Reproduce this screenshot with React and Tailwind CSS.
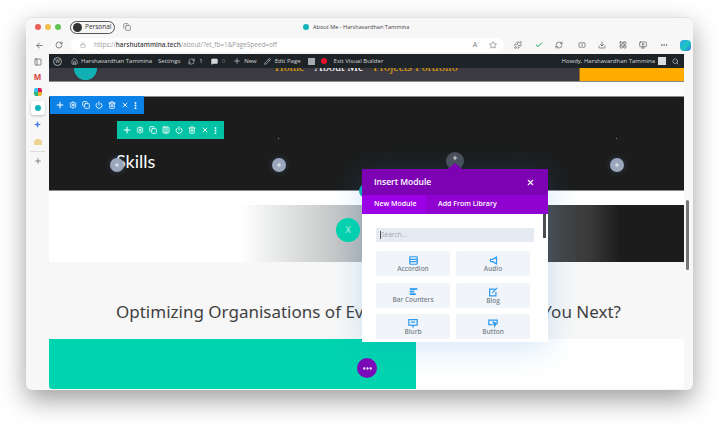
import React from "react";
import {
  ArrowLeft,
  RotateCw,
  Lock,
  Plus,
  Settings,
  Copy,
  Power,
  Trash2,
  X,
  EllipsisVertical,
  Columns3,
  Search,
  Star,
  Pencil,
  MessageSquare,
  RefreshCw,
  House,
  SquareSplitHorizontal,
  LayoutGrid,
  MonitorPlay,
  Ellipsis,
  PanelLeft,
  Puzzle,
  Check,
  Download,
} from "lucide-react";

const blueTools = [Plus, Settings, Copy, Power, Trash2, X];
const greenTools = [Plus, Settings, Copy, Columns3, Power, Trash2, X];

function Toolbar({ tools, className }) {
  return (
    <div className={`absolute flex items-center h-[18px] pl-[5px] gap-[3px] text-white ${className}`}>
      {tools.map((Icon, i) => (
        <span key={i} className="w-[10px] flex justify-center">
          <Icon size={i === 0 ? 10 : 8} strokeWidth={2.5} />
        </span>
      ))}
      <EllipsisVertical size={9} strokeWidth={3} className="-ml-[2px]" />
    </div>
  );
}

function AddDot({ className }) {
  return (
    <div className={`absolute w-[14px] h-[14px] rounded-full bg-[#9aa6bc] flex items-center justify-center text-white shadow-[0_0_6px_rgba(90,120,170,0.35)] ${className}`}>
      <Plus size={6} strokeWidth={3} />
    </div>
  );
}

function AccordionIcon() {
  return (
    <svg width="9" height="9" viewBox="0 0 12 12" fill="none" stroke="#2f9bf0" strokeWidth="1.6">
      <rect x="1" y="1" width="10" height="10" rx="1" />
      <path d="M1 4.5h10M1 7.5h10" />
    </svg>
  );
}
function AudioIcon() {
  return (
    <svg width="9" height="9" viewBox="0 0 12 12" fill="none" stroke="#2f9bf0" strokeWidth="1.6">
      <path d="M2 4.5h3L10 1.5v9L5 7.5H2z" />
    </svg>
  );
}
function BarsIcon() {
  return (
    <svg width="9" height="9" viewBox="0 0 12 12" fill="#2f9bf0">
      <rect x="1" y="1.5" width="10" height="2.4" />
      <rect x="1" y="4.9" width="6" height="2.4" />
      <rect x="1" y="8.3" width="8" height="2.4" />
    </svg>
  );
}
function BlogIcon() {
  return (
    <svg width="10" height="10" viewBox="0 0 12 12" fill="none" stroke="#2f9bf0" strokeWidth="1.5">
      <path d="M8.5 2.5H2v8h7.5V6" />
      <path d="M5 7l6-6" />
    </svg>
  );
}
function BlurbIcon() {
  return (
    <svg width="10" height="10" viewBox="0 0 12 12" fill="none" stroke="#2f9bf0" strokeWidth="1.5">
      <path d="M1 2h10v6.5H7L6 10.5 5 8.5H1z" />
      <path d="M3.5 5h5" />
    </svg>
  );
}
function ButtonIcon() {
  return (
    <svg width="10" height="10" viewBox="0 0 12 12" fill="none" stroke="#2f9bf0" strokeWidth="1.5">
      <path d="M5.5 8H1V2.5h10V6" />
      <path d="M6.5 5l4 2-1.7.8-.8 1.9z" fill="#2f9bf0" />
    </svg>
  );
}

const modules = [
  ["Accordion", AccordionIcon],
  ["Audio", AudioIcon],
  ["Bar Counters", BarsIcon],
  ["Blog", BlogIcon],
  ["Blurb", BlurbIcon],
  ["Button", ButtonIcon],
];

function InsertModule() {
  return (
    <div className="absolute left-[313px] top-[115px] w-[186px] h-[173px] bg-white shadow-[0_5px_30px_rgba(43,135,218,0.22)] font-['Open_Sans',sans-serif]">
      <div className="absolute left-[86px] -top-[6px] w-0 h-0 border-x-[7px] border-x-transparent border-b-[6px] border-b-[#7d02b4]"></div>
      <div className="h-[26px] bg-[#7d02b4] flex items-center justify-between pl-[12px] pr-[13px] text-white">
        <span className="text-[8.5px] font-semibold">Insert Module</span>
        <X size={9} strokeWidth={3} />
      </div>
      <div className="h-[19px] bg-[#8f02cf] flex items-center text-white text-[7px] font-semibold">
        <span className="w-[64px] h-full bg-[#9b00e6] flex items-center pl-[12px]">New Module</span>
        <span className="pl-[12px]">Add From Library</span>
      </div>
      <div className="px-[14px] pt-[14px]">
        <div className="h-[14px] bg-[#e6ebf3] flex items-center pl-[4px] text-[6.5px] text-[#9aa3ad]">
          <span className="w-[1px] h-[8px] bg-[#555]"></span>Search...
        </div>
        <div className="grid grid-cols-[74px_74px] gap-x-[6px] gap-y-[6.5px] mt-[9px]">
          {modules.map(([label, Icon]) => (
            <div key={label} className="h-[25px] bg-[#f1f5f9] rounded-[2px] flex flex-col items-center justify-center pt-px text-[6.5px] font-semibold text-[#7a858f] leading-[8px]">
              <Icon />
              {label}
            </div>
          ))}
        </div>
      </div>
      <div className="absolute right-[2px] top-[45px] w-[3px] h-[24px] bg-[#4a4d55]"></div>
    </div>
  );
}

export default function App() {
  return (
    <div className="w-[719px] h-[425px] bg-white pt-[17px] pl-[26px] overflow-hidden font-['Open_Sans',sans-serif]">
      <div className="w-[667px] h-[373px] rounded-[6px] bg-[#f7f7f7] border-t border-[#e4e4e4] flex flex-col shadow-[0_10px_26px_rgba(0,0,0,0.38)] overflow-hidden">
        {/* title bar */}
        <div className="h-[18px] flex items-center shrink-0">
          <div className="flex items-center gap-[4px] pl-[9px]">
            <span className="w-[6px] h-[6px] rounded-full bg-[#ec5f56]"></span>
            <span className="w-[6px] h-[6px] rounded-full bg-[#f4bd4f]"></span>
            <span className="w-[6px] h-[6px] rounded-full bg-[#61c454]"></span>
          </div>
          <div className="ml-[9px] h-[13px] w-[45px] rounded-full border border-[#555] flex items-center gap-[3px] pl-[2px] text-[6.5px] text-[#333]">
            <span className="w-[9px] h-[9px] rounded-full bg-[#333]"></span>Personal
          </div>
          <Copy size={8} className="ml-[8px] text-[#666]" />
          <div className="ml-[172px] flex items-center gap-[2px] text-[5.6px] text-[#444]">
            <span className="w-[6px] h-[6px] rounded-full bg-[#10b5bb]"></span>
            <span className="ml-[2px]">About Me - Harshavardhan Tammina</span>
          </div>
        </div>
        {/* address bar */}
        <div className="h-[18px] flex items-center shrink-0 text-[#555]">
          <ArrowLeft size={9} className="ml-[9px]" />
          <RotateCw size={8} className="ml-[11px]" />
          <div className="ml-[8px] w-[433px] h-[14px] rounded-full bg-white flex items-center text-[6.4px] text-[#9a9a9a]">
            <Lock size={6} className="ml-[9px] mr-[8px]" />
            <span>https://<b className="text-[#444] font-semibold">harshutammina.tech</b>/about/?et_fb=1&amp;PageSpeed=off</span>
            <span className="ml-auto flex items-center gap-[10px] pr-[7px] text-[#777]">
              <span className="text-[7px]">A<sup className="text-[4px]">°</sup></span>
              <Star size={8} />
            </span>
          </div>
          <div className="ml-[10px] flex items-center gap-[12.5px]">
            <Puzzle size={8} />
            <Check size={8} strokeWidth={3} className="text-[#12a150]" />
            <RefreshCw size={8} />
            <SquareSplitHorizontal size={8} className="ml-[2px]" />
            <Download size={8} />
            <LayoutGrid size={8} />
            <MonitorPlay size={8} />
            <Ellipsis size={8} />
            <span className="w-[11px] h-[11px] rounded-[4px] bg-[linear-gradient(135deg,#29a3e8,#1fc7c0_55%,#2b6fe8)]"></span>
          </div>
        </div>
        {/* body */}
        <div className="flex flex-1 min-h-0">
          <div className="w-[23px] shrink-0 flex flex-col items-center pt-[4px] text-[#555]">
            <PanelLeft size={8} />
            <span className="text-[8px] leading-[10px] mt-[6px] font-bold text-[#d9443b]">M</span>
            <span className="w-[8px] h-[8px] mt-[6px] rounded-[2px] bg-[conic-gradient(#e01e5a_0_25%,#ecb22e_0_50%,#2eb67d_0_75%,#36c5f0_0)]"></span>
            <span className="w-[14px] h-[14px] mt-[5px] rounded-[3px] bg-white shadow-[0_1px_3px_rgba(0,0,0,0.25)] flex items-center justify-center">
              <span className="w-[6px] h-[6px] rounded-full bg-[#10b5bb]"></span>
            </span>
            <svg width="7" height="7" viewBox="0 0 12 12" className="mt-[6px]">
              <path d="M6 0l1.6 4.4L12 6 7.6 7.6 6 12 4.4 7.6 0 6l4.4-1.6z" fill="#4d7fe8" />
            </svg>
            <span className="w-[8px] h-[6px] mt-[11px] rounded-t-[4px] bg-[#eed393]"></span>
            <span className="w-[15px] h-px mt-[6px] bg-[#ddd]"></span>
            <Plus size={8} className="mt-[5px]" />
          </div>

          <div className="w-[635px] relative overflow-hidden rounded-bl-[4px]">
            <div className="h-[14px] bg-[#1d2327] relative z-10 flex items-center text-[6px] text-[#d5d8da] px-[4px]">
              <span className="w-[9px] h-[9px] rounded-full border border-[#a7aaad] mr-[9px] flex items-center justify-center text-[5px] leading-none">W</span>
              <House size={7} className="mr-[3px]" />
              <span className="mr-[6px]">Harshavardhan Tammina</span>
              <span className="mr-[8px]">Settings</span>
              <RefreshCw size={7} className="mr-[4px]" />
              <span className="mr-[8px]">1</span>
              <MessageSquare size={7} className="mr-[4px]" fill="currentColor" />
              <span className="mr-[8px] text-[#777]">0</span>
              <Plus size={8} className="mr-[3px]" />
              <span className="mr-[7px]">New</span>
              <Pencil size={7} className="mr-[4px]" />
              <span className="mr-[7px]">Edit Page</span>
              <span className="w-[7px] h-[7px] bg-[#a7aaad] mr-[6px]"></span>
              <span className="w-[6px] h-[6px] rounded-full bg-[#e8112d] mr-[7px]"></span>
              <span>Exit Visual Builder</span>
              <span className="ml-auto">Howdy, Harshavardhan Tammina</span>
              <span className="w-[8px] h-[8px] bg-[#ddd] ml-[3px] mr-[6px]"></span>
              <Search size={7} className="mr-[1px]" />
            </div>
            <div className="h-[14px] bg-[#3b3941] border-b border-[#888] flex relative overflow-hidden">
              <div className="absolute left-[25px] -top-[11px] w-[23px] h-[23px] rounded-full bg-[#10b0b5]"></div>
              <div className="absolute left-[226px] -top-[8px] flex gap-[10px] text-[12px] leading-[14px] font-['Liberation_Serif',serif] text-[#e8a100]">
                <span>Home</span>
                <span className="text-white">About Me</span>
                <span>Projects Portfolio</span>
              </div>
              <div className="ml-auto w-[105px] bg-[#ffab00] border-l border-[#8a6a20]"></div>
            </div>
            <div className="h-[14px] bg-[#fbfbfb]"></div>
            <div className="h-[95px] bg-[#1c1c1c] border-y border-[#8a8a8a] pl-[67px] pt-[53px] text-white text-[18px] leading-[22px] font-['Lato',sans-serif]">
              Skills
            </div>
            <div className="h-[14px] bg-white"></div>
            <div className="h-[57px] bg-[linear-gradient(90deg,#ffffff_0%,#ffffff_30%,#b4b8b8_49%,#4a4a4a_78%,#3a3a3a_85%,#1c1c1c_90%,#1c1c1c_100%)]"></div>
            <div className="h-[77px] bg-[#f7f7f7] flex items-center justify-between pt-[23px] pl-[67px] pr-[63px] text-[#3f3f3f] text-[17px] font-['Noto_Sans',sans-serif] whitespace-nowrap">
              <span>Optimizing Organisations of Eve</span>
              <span>You Next?</span>
            </div>
            <div className="h-[50px] bg-white flex">
              <div className="w-[367px] bg-[#00d4ae] rounded-bl-[3px]"></div>
            </div>

            {/* builder overlays */}
            <Toolbar tools={blueTools} className="left-[1px] top-[42px] w-[94px] bg-[#0c82e6]" />
            <Toolbar tools={greenTools} className="left-[68px] top-[67px] w-[107px] bg-[#00c3a5]" />
            <AddDot className="left-[61px] top-[104px]" />
            <AddDot className="left-[223px] top-[104px]" />
            <AddDot className="left-[561px] top-[104px]" />
            <span className="absolute left-[229px] top-[84px] w-px h-px bg-[#888]"></span>
            <span className="absolute left-[567px] top-[84px] w-px h-px bg-[#888]"></span>
            <div className="absolute left-[397px] top-[98px] w-[18px] h-[18px] rounded-full bg-[#4a4f58] flex items-start justify-center pt-[3px] text-white">
              <Plus size={6} strokeWidth={3} />
            </div>
            <div className="absolute left-[287px] top-[164px] w-[24px] h-[24px] rounded-full bg-[#00d4ae] flex items-center justify-center text-[9px] text-[#c9f5ec]">
              X
            </div>
            <div className="absolute left-[310px] top-[130px] w-[16px] h-[14px] rounded-full bg-[#10b0b5]"></div>
            <InsertModule />
            <div className="absolute left-[308px] top-[304px] w-[20px] h-[20px] rounded-full bg-[#7a09b8] flex items-center justify-center text-white">
              <Ellipsis size={11} strokeWidth={3} />
            </div>
          </div>

          <div className="w-[9px] shrink-0 relative">
            <div className="absolute left-[2px] top-[146px] w-[3px] h-[70px] rounded-full bg-[#777]"></div>
          </div>
        </div>
      </div>
    </div>
  );
}
